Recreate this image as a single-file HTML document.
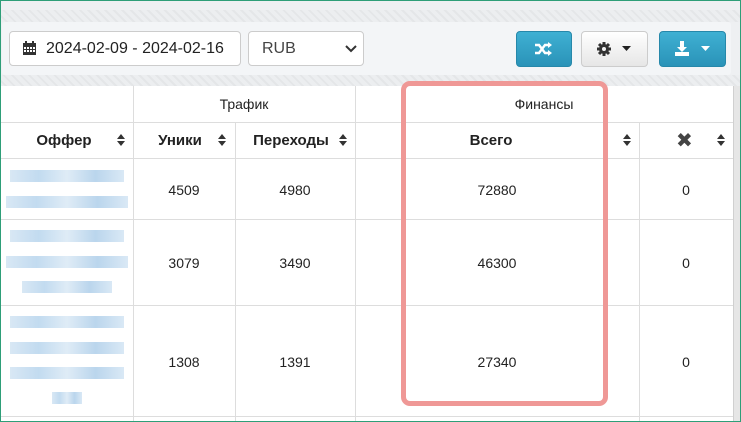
<!DOCTYPE html>
<html><head><meta charset="utf-8"><style>
*{margin:0;padding:0;box-sizing:border-box}
body{width:741px;height:422px;overflow:hidden;background:#eef0f2;font-family:"Liberation Sans",Arial,sans-serif;position:relative}
.frame{position:absolute;left:0;top:0;width:741px;height:422px;border:1px solid #2e9e78;z-index:10;pointer-events:none}
.stripe{position:absolute;left:0;width:741px;height:12px;background:repeating-linear-gradient(45deg,#eceef0 0 4px,#e4e6e8 4px 6px)}
.bar{position:absolute;left:2px;top:22px;width:729px;height:53px;background:#f3f5f7;border-radius:3px}
.inp{position:absolute;top:31px;height:35px;background:#fff;border:1px solid #ccc;border-radius:4px;font-size:16px;color:#222;line-height:33px}
.btn{position:absolute;top:31px;height:36px;border-radius:4px}
.teal{background:linear-gradient(#3fb0d3,#2a93b8);border:1px solid #2688aa}
.wht{background:linear-gradient(#fff,#e6e6e6);border:1px solid #ccc}
.tbl{position:absolute;left:1px;top:86px;width:732px;height:336px;background:#fff}
.hl{position:absolute;height:1px;background:#ddd}
.vl{position:absolute;width:1px;background:#ddd}
.t{position:absolute;font-size:14px;color:#222;text-align:center}
.b{font-weight:bold;font-size:15px}
.sort{position:absolute;width:8px;height:12px}
.blur{position:absolute;height:12px;background:linear-gradient(90deg,#cfe2f2,#b3d2ec,#d7e7f4,#a9cbe8,#d0e3f3);opacity:.8}
.red{position:absolute;left:401px;top:81px;width:207px;height:325px;border:5px solid #ef9896;border-radius:9px;z-index:5}
</style></head><body>
<div class="stripe" style="top:10px"></div>
<div class="stripe" style="top:75px"></div>
<div class="bar"></div>
<div class="inp" style="left:9px;width:232px;padding-left:36px">2024-02-09 - 2024-02-16</div>
<svg style="position:absolute;left:23px;top:41px" width="13" height="14" viewBox="0 0 13 14"><rect x="0" y="2" width="13" height="12" fill="#333"/><rect x="2" y="0" width="2" height="3" fill="#333"/><rect x="9" y="0" width="2" height="3" fill="#333"/><g fill="#fff"><rect x="1" y="6" width="2" height="2"/><rect x="4" y="6" width="2" height="2"/><rect x="7" y="6" width="2" height="2"/><rect x="10" y="6" width="2" height="2"/><rect x="1" y="9" width="2" height="2"/><rect x="4" y="9" width="2" height="2"/><rect x="7" y="9" width="2" height="2"/><rect x="10" y="9" width="2" height="2"/></g></svg>
<div class="inp" style="left:248px;width:116px;padding-left:13px;color:#444">RUB</div>
<svg style="position:absolute;left:345px;top:45px" width="12" height="8"><path d="M1 1l5 5 5-5" stroke="#333" stroke-width="2" fill="none"/></svg>
<div class="btn teal" style="left:516px;width:56px"></div>
<svg style="position:absolute;left:535px;top:42px" width="17" height="14" viewBox="0 0 17 14"><path d="M0 3h4l6 8h4M0 11h4l6-8h4" stroke="#fff" stroke-width="2.4" fill="none"/><path d="M13 0l4 3-4 3zM13 8l4 3-4 3z" fill="#fff"/></svg>
<div class="btn wht" style="left:581px;width:67px"></div>
<svg style="position:absolute;left:597px;top:42px" width="14" height="14" viewBox="0 0 14 14"><circle cx="7" cy="7" r="5" fill="#333"/><g stroke="#333" stroke-width="3"><path d="M7 0v14M0 7h14M2 2l10 10M12 2L2 12"/></g><circle cx="7" cy="7" r="2" fill="#f3f3f3"/></svg>
<svg style="position:absolute;left:622px;top:46px" width="9" height="5"><path d="M0 0h9L4.5 5z" fill="#222"/></svg>
<div class="btn teal" style="left:659px;width:67px"></div>
<svg style="position:absolute;left:675px;top:41px" width="14" height="15" viewBox="0 0 14 15"><path d="M5 0h4v6h3l-5 5-5-5h3z" fill="#fff"/><rect x="0" y="11" width="14" height="4" fill="#fff"/></svg>
<svg style="position:absolute;left:701px;top:46px" width="9" height="5"><path d="M0 0h9L4.5 5z" fill="#fff"/></svg>

<div class="tbl"></div>
<div style="position:absolute;left:733px;top:86px;width:8px;height:336px;background:#e6e6e6;border-left:1px solid #d0d0d0"></div>
<div class="hl" style="left:1px;top:122px;width:732px"></div>
<div class="hl" style="left:1px;top:158px;width:732px"></div>
<div class="hl" style="left:1px;top:219px;width:732px"></div>
<div class="hl" style="left:1px;top:305px;width:732px"></div>
<div class="hl" style="left:1px;top:416px;width:732px"></div>
<div class="vl" style="left:133px;top:86px;height:336px"></div>
<div class="vl" style="left:235px;top:122px;height:300px"></div>
<div class="vl" style="left:355px;top:86px;height:336px"></div>
<div class="vl" style="left:639px;top:122px;height:300px"></div>

<div class="t" style="left:133px;width:222px;top:96px">Трафик</div>
<div class="t" style="left:355px;width:378px;top:96px">Финансы</div>
<div class="t b" style="left:0;width:128px;top:132px">Оффер</div>
<div class="t b" style="left:133px;width:94px;top:132px">Уники</div>
<div class="t b" style="left:235px;width:112px;top:132px">Переходы</div>
<div class="t b" style="left:355px;width:272px;top:132px">Всего</div>
<div class="t" style="top:128px;font-size:20px;color:#444;left:676px;width:16px">✖</div>
<svg width="0" height="0"><defs><g id="s"><path d="M0 5L4 0 8 5zM0 7l4 5 4-5z" fill="#333"/></g></defs></svg>
<svg class="sort" style="left:117px;top:134px"><use href="#s"/></svg>
<svg class="sort" style="left:218px;top:134px"><use href="#s"/></svg>
<svg class="sort" style="left:339px;top:134px"><use href="#s"/></svg>
<svg class="sort" style="left:623px;top:134px"><use href="#s"/></svg>
<svg class="sort" style="left:717px;top:134px"><use href="#s"/></svg>

<div class="t" style="left:133px;width:102px;top:182px">4509</div>
<div class="t" style="left:235px;width:120px;top:182px">4980</div>
<div class="t" style="left:355px;width:284px;top:182px">72880</div>
<div class="t" style="left:639px;width:94px;top:182px">0</div>
<div class="t" style="left:133px;width:102px;top:255px">3079</div>
<div class="t" style="left:235px;width:120px;top:255px">3490</div>
<div class="t" style="left:355px;width:284px;top:255px">46300</div>
<div class="t" style="left:639px;width:94px;top:255px">0</div>
<div class="t" style="left:133px;width:102px;top:354px">1308</div>
<div class="t" style="left:235px;width:120px;top:354px">1391</div>
<div class="t" style="left:355px;width:284px;top:354px">27340</div>
<div class="t" style="left:639px;width:94px;top:354px">0</div>

<div class="blur" style="left:10px;top:170px;width:114px"></div>
<div class="blur" style="left:6px;top:196px;width:122px"></div>
<div class="blur" style="left:10px;top:230px;width:114px"></div>
<div class="blur" style="left:6px;top:256px;width:122px"></div>
<div class="blur" style="left:22px;top:281px;width:90px"></div>
<div class="blur" style="left:10px;top:316px;width:114px"></div>
<div class="blur" style="left:10px;top:342px;width:114px"></div>
<div class="blur" style="left:10px;top:367px;width:114px"></div>
<div class="blur" style="left:52px;top:392px;width:30px"></div>

<div class="red"></div>
<div class="frame"></div>
</body></html>
